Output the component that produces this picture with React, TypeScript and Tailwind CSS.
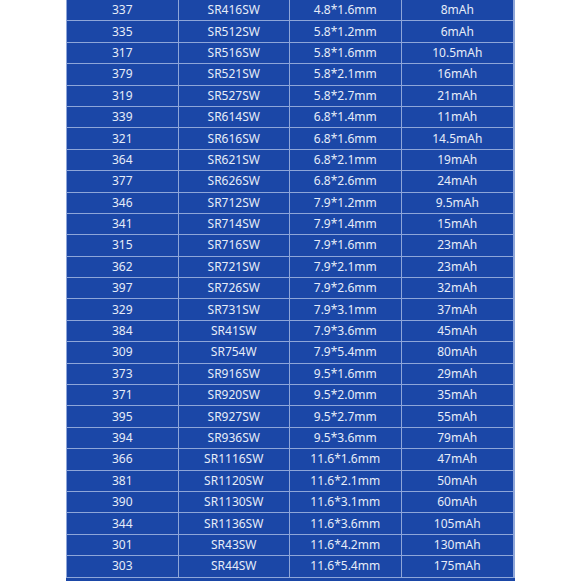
import React from "react";

const rows: [string, string, string, string][] = [
  ["337", "SR416SW", "4.8*1.6mm", "8mAh"],
  ["335", "SR512SW", "5.8*1.2mm", "6mAh"],
  ["317", "SR516SW", "5.8*1.6mm", "10.5mAh"],
  ["379", "SR521SW", "5.8*2.1mm", "16mAh"],
  ["319", "SR527SW", "5.8*2.7mm", "21mAh"],
  ["339", "SR614SW", "6.8*1.4mm", "11mAh"],
  ["321", "SR616SW", "6.8*1.6mm", "14.5mAh"],
  ["364", "SR621SW", "6.8*2.1mm", "19mAh"],
  ["377", "SR626SW", "6.8*2.6mm", "24mAh"],
  ["346", "SR712SW", "7.9*1.2mm", "9.5mAh"],
  ["341", "SR714SW", "7.9*1.4mm", "15mAh"],
  ["315", "SR716SW", "7.9*1.6mm", "23mAh"],
  ["362", "SR721SW", "7.9*2.1mm", "23mAh"],
  ["397", "SR726SW", "7.9*2.6mm", "32mAh"],
  ["329", "SR731SW", "7.9*3.1mm", "37mAh"],
  ["384", "SR41SW", "7.9*3.6mm", "45mAh"],
  ["309", "SR754W", "7.9*5.4mm", "80mAh"],
  ["373", "SR916SW", "9.5*1.6mm", "29mAh"],
  ["371", "SR920SW", "9.5*2.0mm", "35mAh"],
  ["395", "SR927SW", "9.5*2.7mm", "55mAh"],
  ["394", "SR936SW", "9.5*3.6mm", "79mAh"],
  ["366", "SR1116SW", "11.6*1.6mm", "47mAh"],
  ["381", "SR1120SW", "11.6*2.1mm", "50mAh"],
  ["390", "SR1130SW", "11.6*3.1mm", "60mAh"],
  ["344", "SR1136SW", "11.6*3.6mm", "105mAh"],
  ["301", "SR43SW", "11.6*4.2mm", "130mAh"],
  ["303", "SR44SW", "11.6*5.4mm", "175mAh"],
];

export default function App() {
  return (
    <div className="w-[581px] h-[581px] bg-white overflow-hidden">
      <div
        className="ml-[66px] w-[449px] bg-[#1b47a7] text-[#e6ecf8] text-[12px] pb-[3px]"
        style={{ fontFamily: '"Noto Sans", "Open Sans", sans-serif' }}
      >
        <div className="border-l border-r-2 border-[#8ea6d9]">
          {rows.map((r, i) => (
            <div
              key={i}
              className="grid grid-cols-4 h-[21.4px] border-b border-[#8ea6d9]"
            >
              {r.map((c, j) => (
                <div
                  key={j}
                  className={`flex items-center justify-center leading-none ${
                    j < 3 ? "border-r border-[#8ea6d9]" : ""
                  }`}
                >
                  {c}
                </div>
              ))}
            </div>
          ))}
        </div>
      </div>
    </div>
  );
}
